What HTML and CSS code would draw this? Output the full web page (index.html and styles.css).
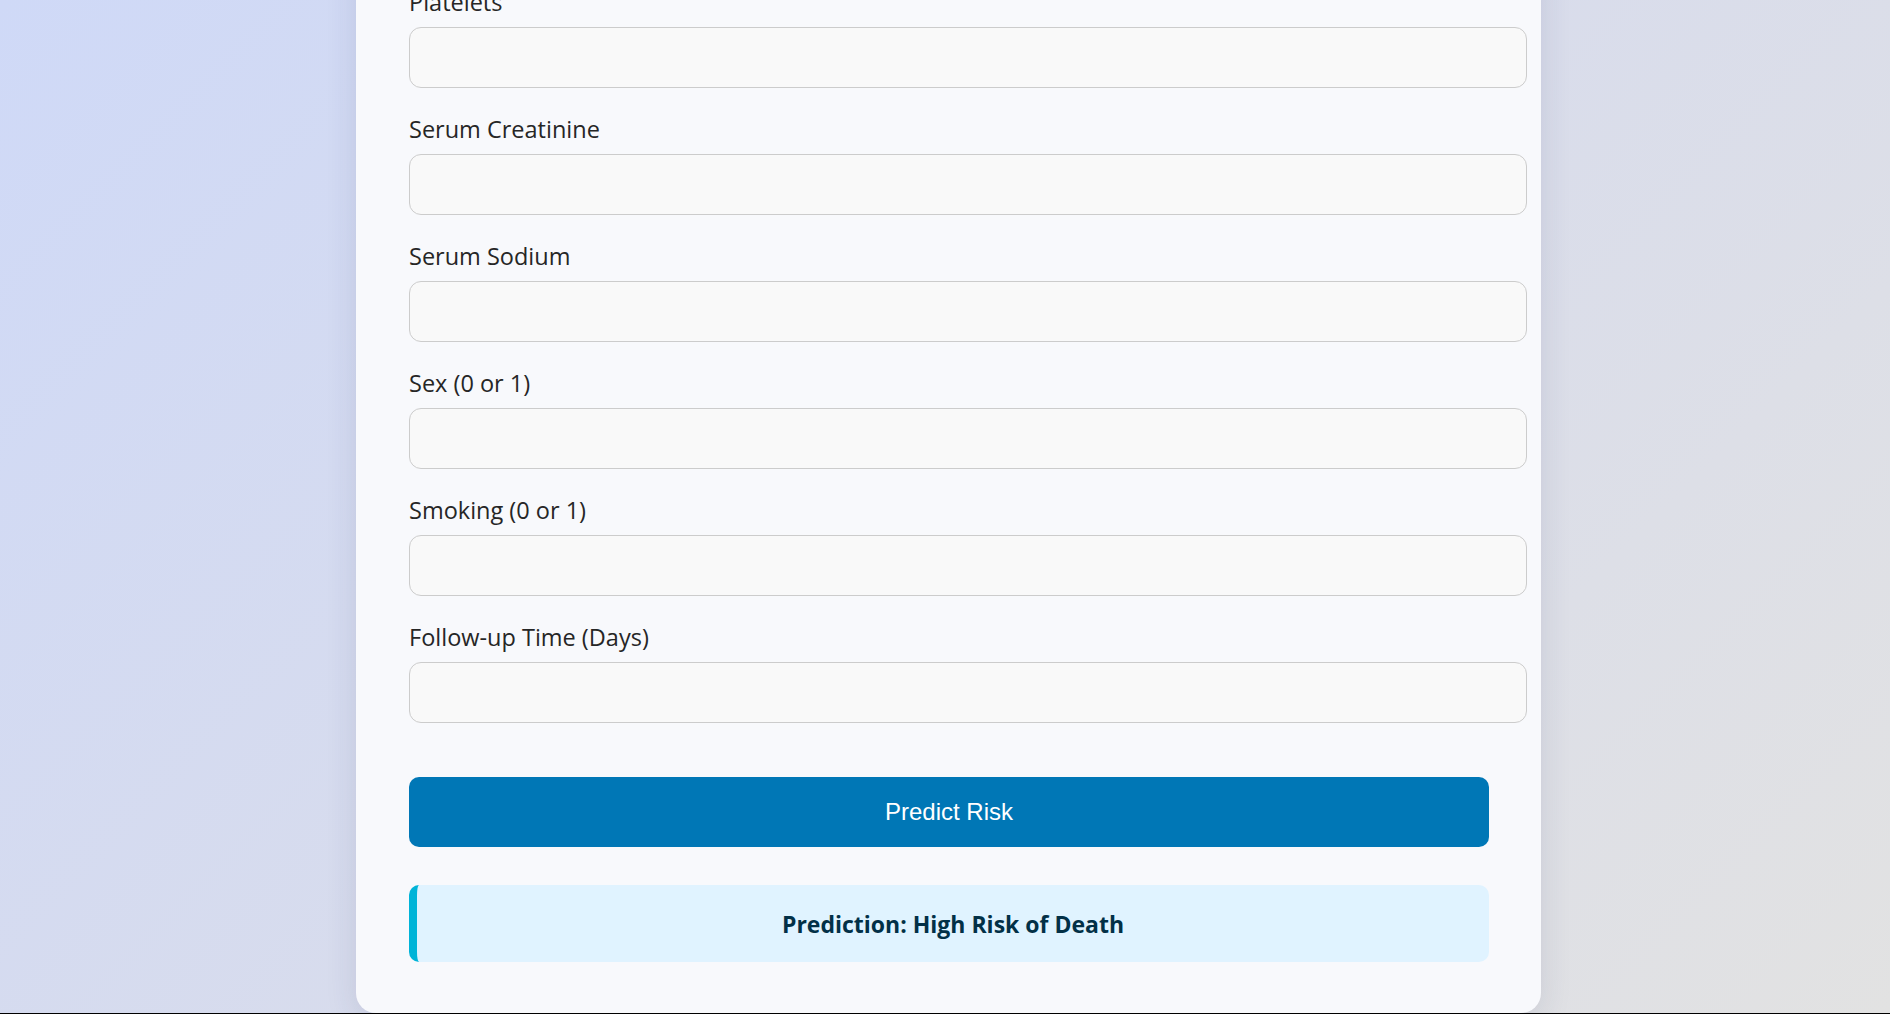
FILE: index.html
```html
<!DOCTYPE html>
<html lang="en">
<head>
<meta charset="utf-8">
<title>Heart Failure Risk Prediction</title>
<link rel="stylesheet" href="styles.css">
</head>
<body>
<main class="card">
  <form class="form">
    <div class="field">
      <label class="label" for="platelets">Platelets</label>
      <input class="input" id="platelets" type="text">
    </div>
    <div class="field">
      <label class="label" for="creatinine">Serum Creatinine</label>
      <input class="input" id="creatinine" type="text">
    </div>
    <div class="field">
      <label class="label" for="sodium">Serum Sodium</label>
      <input class="input" id="sodium" type="text">
    </div>
    <div class="field">
      <label class="label" for="sex">Sex (0 or 1)</label>
      <input class="input" id="sex" type="text">
    </div>
    <div class="field">
      <label class="label" for="smoking">Smoking (0 or 1)</label>
      <input class="input" id="smoking" type="text">
    </div>
    <div class="field">
      <label class="label" for="time">Follow-up Time (Days)</label>
      <input class="input" id="time" type="text">
    </div>
    <button class="predict" type="button">Predict Risk</button>
  </form>
  <div class="result">Prediction: High Risk of Death</div>
</main>
</body>
</html>
```
FILE: styles.css
```css
html, body {
  margin: 0;
  padding: 0;
}

body {
  height: 1013px;
  border-bottom: 1px solid #000;
  overflow: hidden;
  display: flex;
  justify-content: center;
  align-items: flex-end;
  padding-left: 7px;
  background: linear-gradient(135deg, #cfd9f7 0%, #d8dcec 50%, #e2e2e2 100%);
  font-family: "Open Sans", "Noto Sans", sans-serif;
}

.card {
  box-sizing: border-box;
  width: 1185px;
  flex: none;
  padding: 40px 52px 51px 53px;
  background: #f8f9fc;
  border-radius: 20px;
  box-shadow: 0 8px 32px rgba(40, 50, 90, 0.12);
}

.form {
  margin: 0;
}

.field {
  margin-bottom: 26px;
}

.label {
  display: block;
  font-size: 23.5px;
  font-weight: 500;
  line-height: 30px;
  color: #262626;
  margin-bottom: 10px;
}

.input {
  display: block;
  width: 100%;
  height: 23px;
  padding: 18px;
  border: 1px solid #cccccc;
  border-radius: 12px;
  background: #f9f9f9;
  font-size: 18px;
  font-family: inherit;
  outline: none;
}

.predict {
  display: block;
  width: 100%;
  height: 70px;
  margin-top: 54px;
  border: none;
  border-radius: 10px;
  background: #0077b6;
  color: #ffffff;
  font-family: "Liberation Sans", Arial, sans-serif;
  font-size: 24px;
  cursor: pointer;
}

.result {
  box-sizing: border-box;
  height: 77px;
  margin-top: 38px;
  display: flex;
  align-items: center;
  justify-content: center;
  background: #e0f3ff;
  border-left: 8px solid #00b4d8;
  border-radius: 10px;
  color: #023047;
  font-size: 23px;
  font-weight: 700;
}
```
